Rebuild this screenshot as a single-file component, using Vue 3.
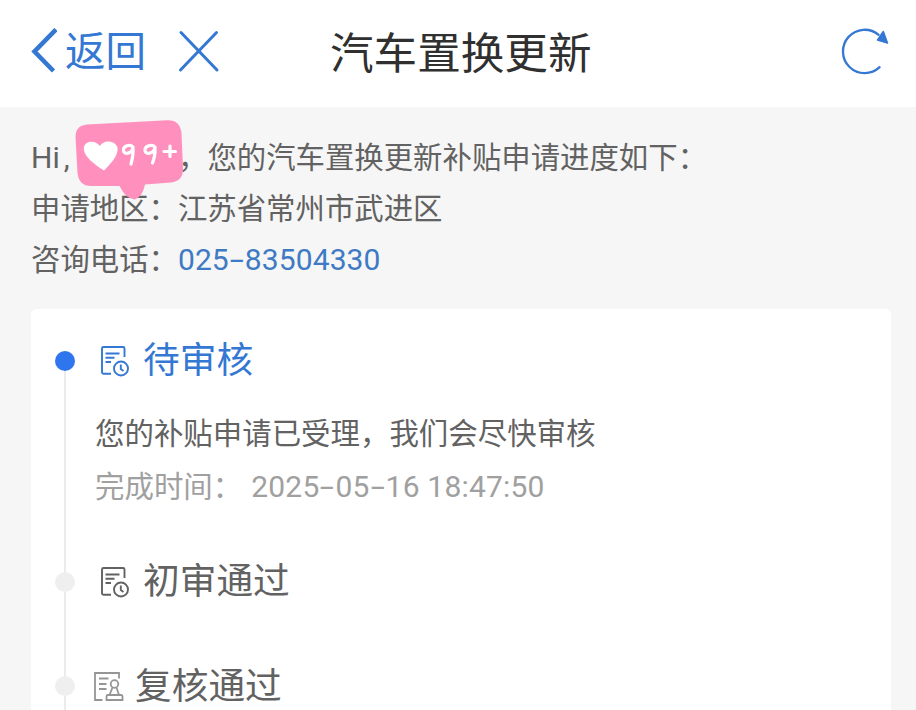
<template>
  <div class="page">
    <header class="nav-bar">
      <button type="button" class="nav-btn back-btn">
        <svg class="back-icon" width="27" height="46" viewBox="0 0 27 46">
          <path d="M26 1.500 L4.500 23.500 L23.500 43" fill="none" stroke="currentColor" stroke-width="4.600" />
        </svg>
        <span class="back-text">返回</span>
      </button>
      <button type="button" class="nav-btn close-btn">
        <svg width="42" height="44" viewBox="0 0 42 44">
          <path d="M3 3.500 L39 41 M38.500 3.500 L2.500 41" fill="none" stroke="currentColor" stroke-width="3" stroke-linecap="round" />
        </svg>
      </button>
      <h1 class="nav-title">汽车置换更新</h1>
      <button type="button" class="nav-btn refresh-btn">
        <svg width="48" height="48" viewBox="0 0 48 48">
          <path d="M38.600 40.200 A21.700 21.700 0 1 1 37.600 7.800" fill="none" stroke="currentColor" stroke-width="2.300" stroke-linecap="round" />
          <path d="M42.300 4.500 L36.500 13 L46.500 16 Z" fill="currentColor" stroke="currentColor" stroke-width="1.500" stroke-linejoin="round" />
        </svg>
      </button>
    </header>

    <section class="summary">
      <p class="summary-line">
        <span class="greeting">Hi<i>,</i>
          <svg class="like-badge" width="112" height="84" viewBox="0 0 112 84">
            <path d="M14 7.500 L94 3.200 Q107 2.500 108.500 16 L110 52 Q110 64 98 65.500 L72 67.500 Q69.500 80 61.500 82.500 Q53 82 46.500 69 L18 69 Q6 69 4.500 56 L2.500 20 Q2.500 8.500 14 7.500 Z" fill="#ff90be" />
            <path d="M31 53.500 C23 48.500 11 40 10.800 32 C10.800 23.500 22 22.500 27 29 C30 22.500 42 23 44.500 30.500 C45.500 39 37.500 47 31 53.500 Z" fill="#fff" />
            <g fill="none" stroke="#fff" stroke-width="3.200" stroke-linecap="round" stroke-linejoin="round">
              <path d="M60 30 C57 26.500 50 29 50.500 33.500 C51 38 58.500 37 60 31 Q60.500 38 58 47" />
              <path d="M82 30 C79 26.500 71.500 29 72 33.500 C72.500 38 80.500 37 82 31 Q82.500 38 79.500 46" />
              <path d="M97 29 V39.500 M91 34.500 H102.500" />
            </g>
          </svg>
        </span>，您的汽车置换更新补贴申请进度如下：
      </p>
      <p class="summary-line">申请地区：江苏省常州市武进区</p>
      <p class="summary-line">咨询电话：<a class="phone">025<b class="dash">-</b>83504330</a></p>
    </section>

    <main class="card">
      <div
        v-for="step in steps"
        :key="step.title"
        class="step"
        :class="{ active: step.active, detailed: step.desc }"
      >
        <div class="rail"><span class="dot"></span></div>
        <div class="step-body">
          <div class="step-head" :class="step.icon">
            <svg v-if="step.icon === 'clock'" class="step-icon" width="30" height="32" viewBox="0 0 30 32">
              <g fill="none" stroke="currentColor" stroke-width="1.900">
                <path d="M11 28.800 H3.500 Q2 28.800 2 27.300 V3.500 Q2 2 3.500 2 H23 Q24.500 2 24.500 3.500 V12" />
                <path d="M5.500 8.500 H19.500 M5.500 12.800 H14.500 M5.500 17 H11" />
                <circle cx="21" cy="23.500" r="7" />
                <path d="M20.800 19.500 V24 L23.500 26" />
              </g>
            </svg>
            <svg v-else class="step-icon" width="32" height="32" viewBox="0 0 32 32">
              <g fill="none" stroke="currentColor" stroke-width="1.800">
                <path d="M9.500 29 H2 V2 H26 V7.500" />
                <path d="M6 7.500 H15.500 M6 13 H13.500 M6 18 H13.500" />
                <circle cx="21.500" cy="13" r="3.800" />
                <path d="M19.500 16.500 L16.500 24 M23.500 16.500 L26 24 M13.500 29 V25.500 Q13.500 24 15 24 H28 Q29.500 24 29.500 25.500 V29 Z" />
              </g>
            </svg>
            <h2 class="step-title">{{ step.title }}</h2>
          </div>
          <template v-if="step.desc">
            <p class="step-desc">{{ step.desc }}</p>
            <p class="step-time">
              完成时间：<span class="time">
                <template v-for="(part, i) in step.date.split('-')" :key="i"><b v-if="i" class="dash">-</b>{{ part }}</template>
                {{ step.time }}
              </span>
            </p>
          </template>
        </div>
      </div>
    </main>
  </div>
</template>

<script setup>
import { ref } from 'vue';

const steps = ref([
  {
    title: '待审核',
    icon: 'clock',
    active: true,
    desc: '您的补贴申请已受理，我们会尽快审核',
    date: '2025-05-16',
    time: '18:47:50'
  },
  { title: '初审通过', icon: 'clock' },
  { title: '复核通过', icon: 'stamp' }
]);
</script>

<style>
body {
  background: #f6f6f6;
}
</style>

<style scoped>
.page {
  height: 710px;
  overflow: hidden;
  display: flex;
  flex-direction: column;
  background: #f6f6f6;
  color: #626262;
  font-family: "Noto Sans CJK SC", sans-serif;
}

h1,
h2,
p {
  margin: 0;
  font-weight: 400;
  white-space: nowrap;
}

.nav-bar {
  flex: none;
  height: 107px;
  box-sizing: border-box;
  padding: 0 27px 5px 30px;
  display: flex;
  align-items: center;
  background: #fff;
}

.nav-btn {
  display: flex;
  align-items: center;
  padding: 0;
  border: none;
  background: none;
  color: #3478d3;
  font-family: inherit;
}

.back-btn {
  gap: 8px;
  font-size: 40.5px;
  line-height: 60px;
}

.back-text {
  margin-top: -4px;
}

.close-btn {
  margin-left: 32px;
}

.nav-title {
  margin: -3px 0 0 110px;
  color: #303030;
  font-size: 43.6px;
  line-height: 64px;
}

.refresh-btn {
  margin-left: auto;
}

.summary {
  flex: none;
  height: 202px;
  box-sizing: border-box;
  padding: 23px 31px 0;
}

.summary-line {
  height: 51px;
  font-size: 29.4px;
  line-height: 51px;
}

.greeting {
  position: relative;
  display: inline-block;
  width: 147px;
  font-family: Roboto, sans-serif;
  font-size: 30px;
}

.greeting i {
  margin-left: 4px;
  font-style: normal;
}

.like-badge {
  position: absolute;
  left: 42px;
  top: -15px;
}

.phone,
.time {
  font-family: Roboto, sans-serif;
  font-size: 30px;
}

.phone {
  color: #3f7ac4;
  letter-spacing: 0.1px;
}

.dash {
  display: inline-block;
  width: 16px;
  font-weight: 400;
  text-align: center;
  transform: scaleX(1.7);
}

.card {
  flex: 1;
  margin: 0 25px 0 31px;
  padding-top: 21px;
  border-radius: 6px 6px 0 0;
  background: #fff;
}

.step {
  display: flex;
  height: 104px;
}

.step.detailed {
  height: 221px;
}

.rail {
  flex: none;
  width: 69px;
  box-sizing: border-box;
  padding: 21px 0 0 24px;
  background: linear-gradient(#ebebeb, #ebebeb) 33px 0 / 2px 100% no-repeat;
}

.step.active .rail {
  background-position: 33px 31px;
}

.dot {
  display: block;
  width: 20px;
  height: 20px;
  border-radius: 50%;
  background: #efefef;
}

.active .dot {
  background: #2f76ee;
}

.step-head {
  display: flex;
  align-items: center;
  height: 60px;
  gap: 13px;
}

.step-head.stamp {
  margin-left: -7px;
  gap: 10px;
  height: 62px;
}

.step-head.stamp .step-icon {
  color: #959595;
}

.step-icon {
  flex: none;
  margin-top: 2px;
}

.step-title {
  margin-top: -6px;
  font-size: 36.7px;
  line-height: 54px;
}

.active .step-head {
  color: #3478d3;
}

.step-desc,
.step-time {
  margin-left: -5px;
  font-size: 29.45px;
  line-height: 53px;
}

.step-desc {
  margin-top: 15px;
}

.step-time {
  color: #a0a0a0;
}

.time {
  margin-left: 9px;
  letter-spacing: 0.2px;
}
</style>
